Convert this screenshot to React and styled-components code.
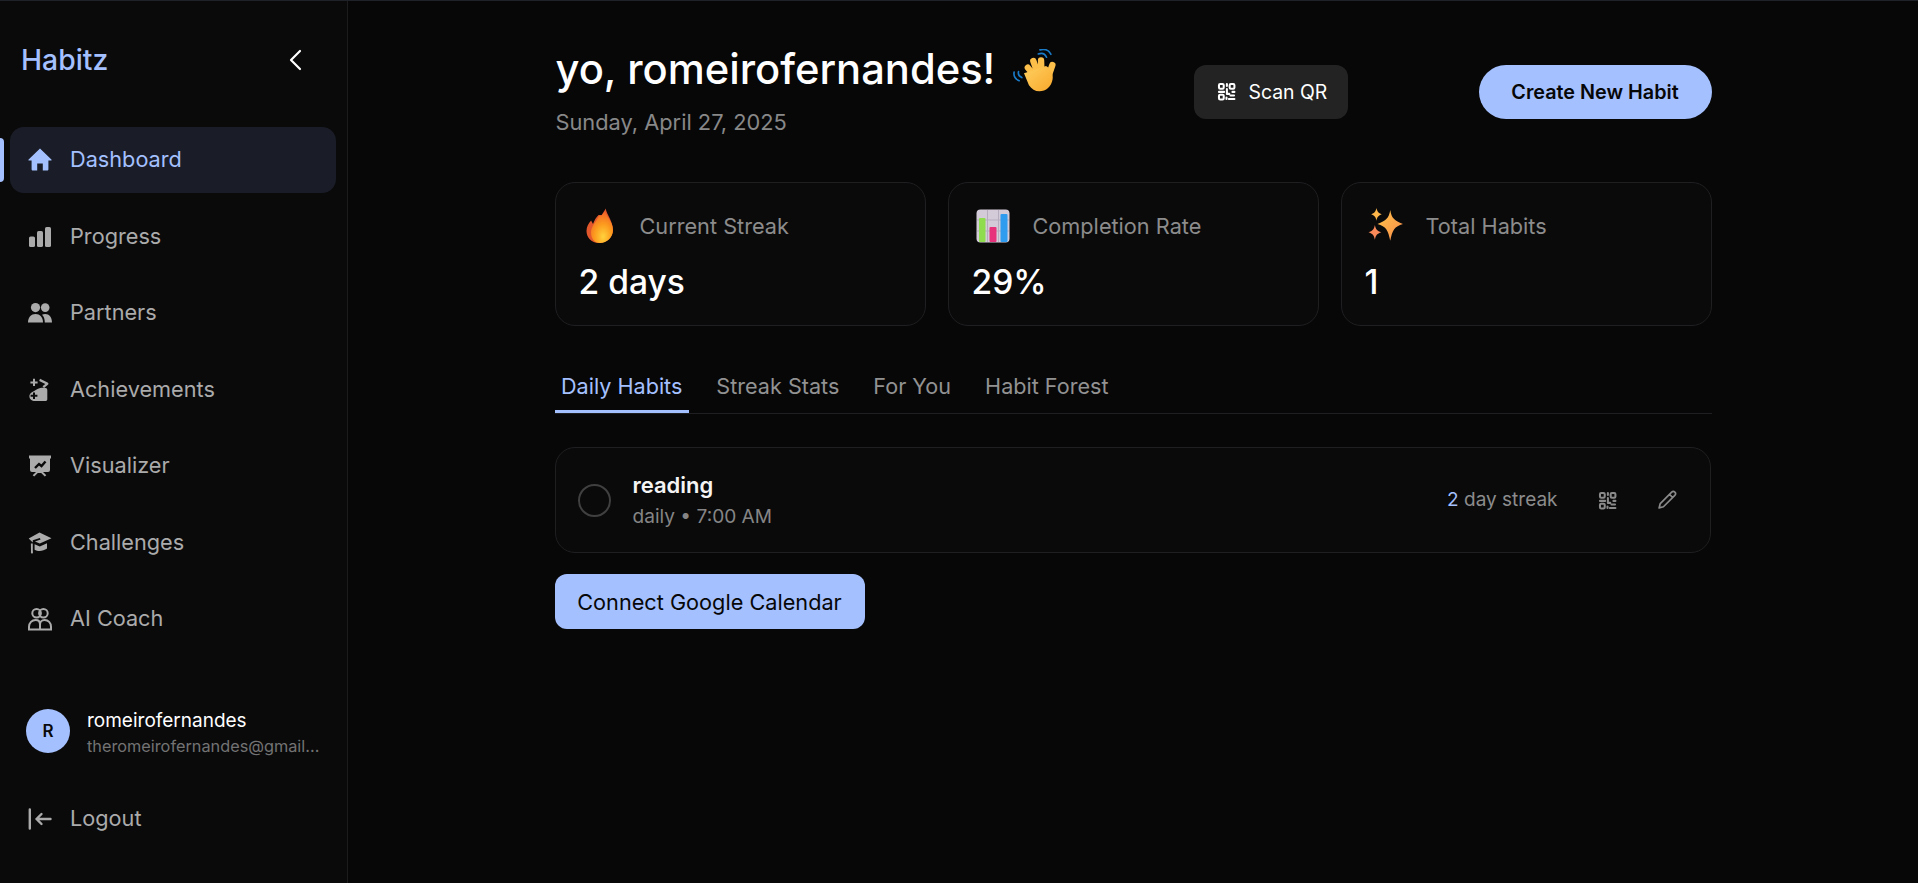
import React from "react";
import styled, { createGlobalStyle } from "styled-components";

const accent = "#a4c0ff";
const muted = "#ababab";

const Global = createGlobalStyle`
  * { box-sizing: border-box; }
  html, body { margin: 0; height: 100%; background: #070708; overflow: hidden; }
  body { font-family: Inter, "Noto Sans", sans-serif; color: #fff; }
  button { font-family: inherit; border: 0; cursor: pointer; }
`;

const Page = styled.div`
  display: flex; height: 883px; border-top: 1px solid #20222a;
`;
const Sidebar = styled.aside`
  width: 348px; flex: none; display: flex; flex-direction: column; position: relative;
  background: #0a0a0b; border-right: 1px solid #1c1c1e;
  padding: 0 11px 31px 10px;
`;
const SideHead = styled.div`
  height: 118px; display: flex; align-items: center; justify-content: space-between;
  padding: 0 28px 0 11px; flex: none;
`;
const Logo = styled.div`
  font-size: 28.3px; font-weight: 500; color: ${accent}; line-height: 1;
`;
const Collapse = styled.button`
  background: none; padding: 0; display: flex; width: 24px; height: 24px; color: #fff;
`;
const Nav = styled.nav`
  display: flex; flex-direction: column; gap: 10.5px; margin-top: 8px;
`;
const NavItem = styled.a`
  display: flex; align-items: center; gap: 18px; height: 66px; padding-left: 18px;
  border-radius: 14px; font-size: 21.7px; line-height: 1;
  color: ${p => (p.$active ? accent : muted)};
  background: ${p => (p.$active ? "#1a1d27" : "transparent")};
  position: relative;
  svg { flex: none; width: 24px; height: 24px; }
`;
const Indicator = styled.span`
  position: absolute; left: -10px; top: 11px; width: 4px; height: 44px;
  background: ${accent}; border-radius: 0 4px 4px 0;
`;
const SideFoot = styled.div`
  margin-top: auto; display: flex; flex-direction: column; gap: 30px;
`;
const UserRow = styled.div`
  display: flex; align-items: center; gap: 17px; padding-left: 16px;
`;
const Avatar = styled.div`
  width: 44px; height: 44px; border-radius: 50%; background: ${accent}; color: #0a0a0b;
  display: flex; align-items: center; justify-content: center; font-size: 17px; font-weight: 600; flex: none;
`;
const UserInfo = styled.div`
  min-width: 0; flex: 1; display: flex; flex-direction: column; gap: 4px; padding-top: 5px;
`;
const UserName = styled.div`
  font-size: 19px; line-height: 22px; color: #fff;
`;
const UserMail = styled.div`
  font-size: 16.3px; line-height: 20px; color: #737373; white-space: nowrap;
`;

const Main = styled.main`
  flex: 1; min-width: 0; background: #070708; padding-top: 44px;
`;
const Content = styled.div`
  width: 1157px; margin: 0 auto;
`;
const Header = styled.header`
  display: flex; justify-content: space-between; align-items: center; height: 91px;
`;
const TitleBlock = styled.div`
  display: flex; flex-direction: column; gap: 15px; padding-left: 1px;
`;
const Title = styled.h1`
  margin: 0; font-size: 41.7px; line-height: 48px; font-weight: 500; color: #fff;
  display: flex; align-items: center; gap: 18px; white-space: nowrap;
  svg { margin-top: 3px; }
`;
const DateLine = styled.div`
  font-size: 21.8px; line-height: 28px; color: #888;
`;
const Actions = styled.div`
  display: flex; gap: 131px; align-items: center; margin-top: 2px;
`;
const ScanButton = styled.button`
  display: flex; align-items: center; gap: 13px; height: 54px; width: 154px; padding-left: 23px;
  background: #232323; color: #fff; border-radius: 12px; font-size: 19.4px;
`;
const CreateButton = styled.button`
  height: 54px; width: 233px; border-radius: 27px; background: ${accent}; color: #070708;
  font-size: 19.8px; font-weight: 600;
`;
const Cards = styled.section`
  display: grid; grid-template-columns: repeat(3, 1fr); gap: 22px; margin-top: 46px;
`;
const Card = styled.div`
  height: 144px; border: 1px solid #1f1f21; border-radius: 20px; background: #0a0a0b;
  padding: 23px 23px 0;
`;
const CardTop = styled.div`
  display: flex; align-items: center; height: 40px; gap: 19px;
`;
const EmojiBox = styled.div`
  width: 42px; height: 40px; display: flex; align-items: center; justify-content: center; flex: none;
`;
const CardLabel = styled.div`
  font-size: 21.7px; color: #8c8c8c;
`;
const CardValue = styled.div`
  font-size: 33.6px; line-height: 40px; font-weight: 500; color: #fff; margin-top: 16px;
`;
const Tabs = styled.div`
  display: flex; gap: 21px; margin-top: 37px; border-bottom: 1px solid #1f1f21; height: 51px;
`;
const Tab = styled.div`
  padding: 0 6.5px 1px; height: 50px; display: flex; align-items: center; font-size: 21.6px;
  color: ${p => (p.$active ? accent : "#929292")};
  border-bottom: 3px solid ${p => (p.$active ? accent : "transparent")};
`;
const HabitCard = styled.div`
  margin-top: 33px; height: 106px; width: 1156px; border: 1px solid #1f1f21; border-radius: 20px;
  background: #0a0a0b; display: flex; align-items: center; padding: 0 33px 0 22px;
`;
const Check = styled.div`
  width: 33px; height: 33px; border-radius: 50%; border: 2px solid #404040; flex: none;
`;
const HabitText = styled.div`
  margin-left: 22px; flex: 1; display: flex; flex-direction: column; gap: 6px; padding-top: 2px;
`;
const HabitName = styled.div`
  font-size: 22px; line-height: 25px; font-weight: 600; color: #f4f4f4;
`;
const HabitMeta = styled.div`
  font-size: 19.1px; line-height: 25px; color: #858585;
`;
const Streak = styled.div`
  font-size: 19px; color: #8c8c8c; margin-bottom: 2px;
  b { font-weight: 400; color: ${accent}; }
`;
const IconBtn = styled.button`
  background: none; padding: 0; display: flex; color: #8a8a8a; margin-left: ${p => p.$ml}px;
`;
const CalendarButton = styled.button`
  margin-top: 21px; height: 55px; width: 310px; border-radius: 12px; background: ${accent};
  color: #070708; font-size: 21.7px;
`;

const QrIcon = ({ size = 19 }) => (
  <svg width={size} height={size} viewBox="0 0 24 24" fill="none" stroke="currentColor" strokeWidth="2.6" strokeLinecap="round" strokeLinejoin="round">
    <rect x="2.5" y="2.5" width="6" height="6" rx="1.5" />
    <rect x="16" y="2.5" width="6" height="6" rx="1.5" />
    <rect x="2.5" y="16" width="6" height="6" rx="1.5" />
    <path d="M12.500 2.500v2.500M2.500 12.500h6.500M12.500 9v6h3M19.500 12.500h2.500M15 21.500h7M17 17h4.500M12 19.500v2" />
  </svg>
);
const Pencil = () => (
  <svg width="20" height="20" viewBox="0 0 24 24" fill="none" stroke="currentColor" strokeWidth="2" strokeLinecap="round" strokeLinejoin="round">
    <path d="M2.500 21.500l1.400-5.200L17.600 2.600a2.600 2.600 0 0 1 3.800 3.800L7.700 20.100l-5.200 1.400zM15 5.200l3.800 3.800" />
  </svg>
);

const icons = {
  home: (
    <svg viewBox="0 0 24 24" fill="currentColor"><path d="M12 .6 .6 11.400c-.5.500-.2 1.200.5 1.200H3.600v8.600c0 .8.500 1.300 1.300 1.300H9.200v-7h5.600v7h4.300c.8 0 1.300-.5 1.300-1.300v-8.600h2.500c.7 0 1-.7.500-1.200L12 .6z" /></svg>
  ),
  bars: (
    <svg viewBox="0 0 24 24" fill="currentColor">
      <rect x="1" y="11.500" width="6" height="10.500" rx="1.600" />
      <rect x="9" y="6" width="6" height="16" rx="1.600" />
      <rect x="17" y="2" width="6" height="20" rx="1.600" />
    </svg>
  ),
  users: (
    <svg viewBox="0 0 24 24" fill="currentColor">
      <circle cx="7.500" cy="6.600" r="4.600" /><circle cx="17.200" cy="6.600" r="4.300" />
      <path d="M0 21.500c0-5.300 3.200-8.500 7.500-8.500s7.500 3.200 7.500 8.500H0z" />
      <path d="M16.800 21.500c0-3.200-.8-6-2.800-7.800 1-.5 2.100-.7 3.200-.7 4 0 6.800 3.300 6.800 8.500h-7.200z" />
    </svg>
  ),
  trophy: (
    <svg viewBox="0 0 24 24" fill="currentColor">
      <path d="M5 .8h2v2.600h2.600v2H7V8H5V5.400H2.400v-2H5z" />
      <path d="M12 .8l7.600 3.700c1 .5 1.100 1.500.3 2.200l-3.900 3.300-1.500-1.700 2.800-2.400-6.100-3z" />
      <path d="M9.500 11c2.500-1.200 6-1.600 8.300-.9 1 .3 1.500 1.100 1.500 2.100v9c0 1.100-.8 1.900-1.900 1.900H7c-3.200 0-5.600-2.100-5.600-4.900 0-3 3.200-4.400 8.100-7.200z" />
      <path d="M5 14.500h2v2.300h2.400v2H7v2.300H5v-2.300H2.600v-2H5z" fill="#0a0a0b" />
    </svg>
  ),
  board: (
    <svg viewBox="0 0 24 24" fill="currentColor">
      <path d="M1 1.500h22v3h-1v11.500a2 2 0 0 1-2 2h-5l3.300 3.200-1.500 1.400-3.600-3.600h-3.400l-3.600 3.600-1.500-1.400L8 18H4a2 2 0 0 1-2-2V4.500H1z" />
      <path d="M7 14l4-4 2.500 2L17.500 7.500" fill="none" stroke="#0a0a0b" strokeWidth="2.400" />
    </svg>
  ),
  cap: (
    <svg viewBox="0 0 24 24" fill="currentColor">
      <path d="M11.500 1.500 23.500 7.200 11.800 12.600 7 10.400l5.600-1.800-.8-1.700-7 2.300v2.300L.7 7.600z" />
      <path d="M6.600 13.200l5.200 2.400 7.200-3.400v5.300c-2.300 1.600-4.800 2.500-7.400 2.500-1.800 0-3.600-.4-5-1.200z" />
      <path d="M2.900 12.500h1.900v7.200l.2 1.800-1 1.400-1.100-1.400.1-1.800z" />
    </svg>
  ),
  coach: (
    <svg viewBox="0 0 24 24" fill="none" stroke="currentColor" strokeWidth="2">
      <circle cx="8.600" cy="6.300" r="4.300" /><circle cx="15.400" cy="6.300" r="4.300" />
      <path d="M1 22.400v-2.600c0-4 3-6.800 6.600-6.800 3.400 0 4.400 2.400 4.400 4.400v5zM12 17.400c0-2 1.400-4.400 4.600-4.400 3.600 0 6.400 2.800 6.400 6.800v2.600H1" />
    </svg>
  ),
  logout: (
    <svg viewBox="0 0 24 24" fill="none" stroke="currentColor" strokeWidth="2.400" strokeLinecap="round" strokeLinejoin="round">
      <path d="M1.800 2.500v19M22.500 12H8.500M13.500 7l-5 5 5 5" />
    </svg>
  ),
};

const Wave = () => (
  <svg width="44" height="44" viewBox="0 0 40 40" fill="none">
    <defs>
      <linearGradient id="hand" x1="0" y1="0" x2="1" y2="1">
        <stop offset="0" stopColor="#ffd060" /><stop offset="1" stopColor="#f8a82c" />
      </linearGradient>
    </defs>
    <path d="M23 4.500c3-1.200 6-.4 7.500 3M24.500 .8c4-1 8-.1 10 4" stroke="#1a7cc9" strokeWidth="1.500" strokeLinecap="round" />
    <path d="M1 21c-.6 3.500 1.400 6.400 4.600 7.800M5 20.500c-.5 2.400.8 4.600 3 5.500" stroke="#1a7cc9" strokeWidth="1.500" strokeLinecap="round" />
    <path d="M22 27 13.500 17M24 26 18.500 11M26 26 25.500 10.500M31.500 27 35.800 14.500" stroke="#fcc04a" strokeLinecap="round" strokeWidth="5.800" />
    <path d="M10 22 30 15.500c4 2 7 7 6 12-1 6.500-6 11-12 11-4 0-7-2-9.500-5.500z" fill="url(#hand)" />
  </svg>
);
const Flame = () => (
  <svg width="30" height="36" viewBox="0 0 30 36">
    <defs>
      <radialGradient id="fl" cx="0.55" cy="0.8" r="0.8">
        <stop offset="0" stopColor="#ffd23c" /><stop offset="0.5" stopColor="#fc9a1e" /><stop offset="1" stopColor="#f0602a" />
      </radialGradient>
    </defs>
    <path d="M14 35C6 35 1.500 29 1.500 23c0-4.400 2-7.600 4.600-10.600L8 16c1.200-4 4-7.400 5.600-9h3C19 3.400 20 2 20.600 .5 22 7 28 13.500 28 22c0 7-6 13-14 13z" fill="#e2582c" />
    <path d="M15 35C9 35 6 30 6 24.500c0-6 5-10.500 8-16.500 3 0 4-2 6-5 1 5 8 11 8 19 0 7-6 13-13 13z" fill="url(#fl)" />
  </svg>
);
const ChartEmoji = () => (
  <svg width="34" height="34" viewBox="0 0 34 34">
    <rect x="0.500" y="0.500" width="33" height="33" rx="4" fill="#d3ccd8" />
    <path d="M11.500 1v32M22.500 1v32M1 11h32M1 22h32" stroke="#b5adbd" strokeWidth="1" />
    <rect x="3" y="9" width="6.500" height="24" rx="1" fill="#8fdc4e" />
    <rect x="13.500" y="18" width="7" height="15" rx="1" fill="#e7317a" />
    <rect x="24.500" y="5" width="7" height="28" rx="1" fill="#2f9cf0" />
  </svg>
);
const Sparkles = () => (
  <svg width="36" height="36" viewBox="0 0 34 34">
    <defs>
      <linearGradient id="sp" x1="0" y1="0" x2="1" y2="1">
        <stop offset="0" stopColor="#ffc44a" /><stop offset="1" stopColor="#f98a4a" />
      </linearGradient>
    </defs>
    <path d="M21 2c1.200 7.500 4 10.500 12 13-8 2.500-10 5.500-12 16-2-10.500-4-13.500-12-16 8-2.500 10.800-5.500 12-13z" fill="url(#sp)" />
    <path d="M8 0c.7 3.500 1.800 4.700 5 6-3.200 1.300-4.300 2.500-5 6-.7-3.500-1.800-4.700-5-6 3.200-1.300 4.300-2.500 5-6z" fill="#fdb64a" />
    <path d="M6.500 16c.8 4.200 2.200 5.600 6 7-3.800 1.400-5.200 2.800-6 7-.8-4.200-2.200-5.600-6-7 3.800-1.400 5.200-2.800 6-7z" fill="#fa8a5a" />
  </svg>
);

const navItems = [
  ["Dashboard", "home", true],
  ["Progress", "bars"],
  ["Partners", "users"],
  ["Achievements", "trophy"],
  ["Visualizer", "board"],
  ["Challenges", "cap"],
  ["AI Coach", "coach"],
];
const stats = [
  ["Current Streak", "2 days", <Flame />],
  ["Completion Rate", "29%", <ChartEmoji />],
  ["Total Habits", "1", <Sparkles />],
];
const tabs = ["Daily Habits", "Streak Stats", "For You", "Habit Forest"];

export default function App() {
  return (
    <>
      <Global />
      <Page>
        <Sidebar>
          <SideHead>
            <Logo>Habitz</Logo>
            <Collapse>
              <svg width="24" height="24" viewBox="0 0 24 24" fill="none" stroke="currentColor" strokeWidth="2.200" strokeLinecap="round" strokeLinejoin="round">
                <path d="M16 3 7 12l9 9" />
              </svg>
            </Collapse>
          </SideHead>
          <Nav>
            {navItems.map(([label, icon, active]) => (
              <NavItem key={label} $active={active}>
                {active && <Indicator />}
                {icons[icon]}
                {label}
              </NavItem>
            ))}
          </Nav>
          <SideFoot>
            <UserRow>
              <Avatar>R</Avatar>
              <UserInfo>
                <UserName>romeirofernandes</UserName>
                <UserMail>theromeirofernandes@gmail...</UserMail>
              </UserInfo>
            </UserRow>
            <NavItem>{icons.logout}Logout</NavItem>
          </SideFoot>
        </Sidebar>
        <Main>
          <Content>
            <Header>
              <TitleBlock>
                <Title>yo, romeirofernandes! <Wave /></Title>
                <DateLine>Sunday, April 27, 2025</DateLine>
              </TitleBlock>
              <Actions>
                <ScanButton><QrIcon />Scan QR</ScanButton>
                <CreateButton>Create New Habit</CreateButton>
              </Actions>
            </Header>
            <Cards>
              {stats.map(([label, value, emoji]) => (
                <Card key={label}>
                  <CardTop>
                    <EmojiBox>{emoji}</EmojiBox>
                    <CardLabel>{label}</CardLabel>
                  </CardTop>
                  <CardValue>{value}</CardValue>
                </Card>
              ))}
            </Cards>
            <Tabs>
              {tabs.map((t, i) => <Tab key={t} $active={i === 0}>{t}</Tab>)}
            </Tabs>
            <HabitCard>
              <Check />
              <HabitText>
                <HabitName>reading</HabitName>
                <HabitMeta>daily • 7:00 AM</HabitMeta>
              </HabitText>
              <Streak><b>2</b> day streak</Streak>
              <IconBtn $ml={40}><QrIcon /></IconBtn>
              <IconBtn $ml={40}><Pencil /></IconBtn>
            </HabitCard>
            <CalendarButton>Connect Google Calendar</CalendarButton>
          </Content>
        </Main>
      </Page>
    </>
  );
}
